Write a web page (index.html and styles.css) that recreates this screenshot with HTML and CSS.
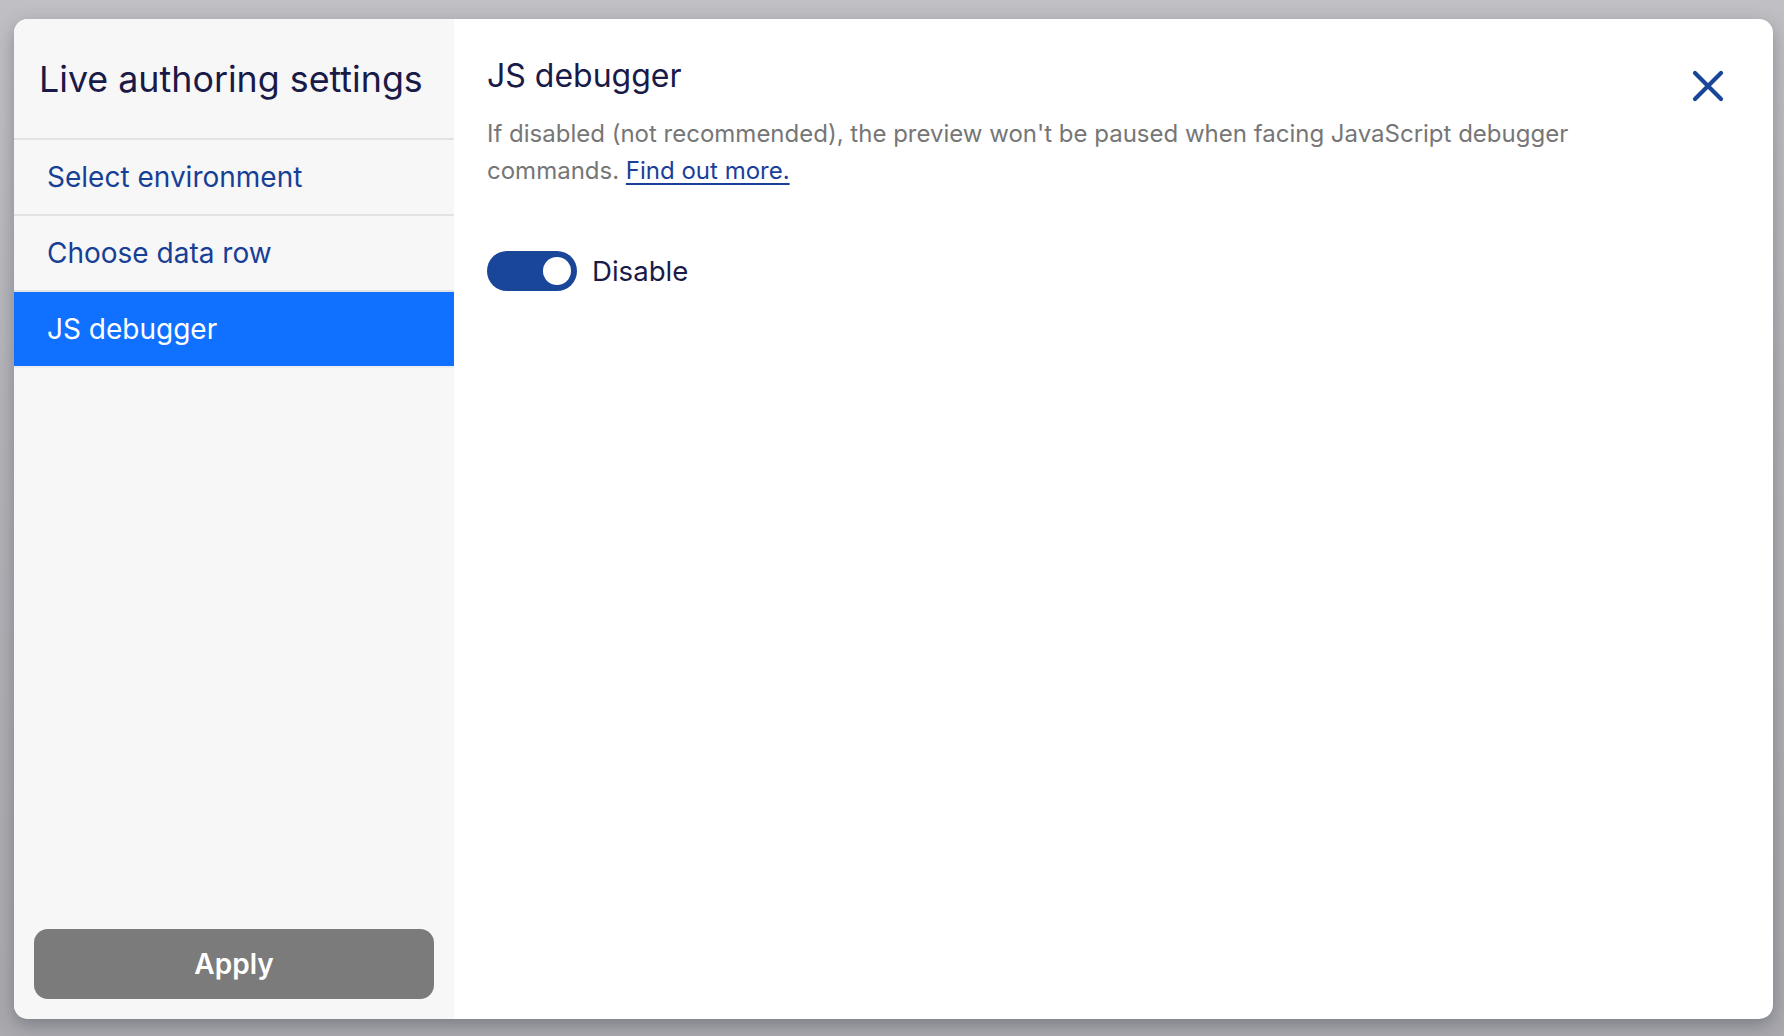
FILE: index.html
```html
<!DOCTYPE html>
<html lang="en">
<head>
  <meta charset="UTF-8">
  <meta name="viewport" content="width=device-width, initial-scale=1">
  <title>Live authoring settings</title>
  <link rel="stylesheet" href="styles.css">
</head>
<body>
  <div class="backdrop">
    <div class="modal">
      <!-- левая колонка с навигацией -->
      <aside class="sidebar">
        <h2 class="sidebar-title">Live authoring settings</h2>
        <nav class="nav">
          <a class="nav-item" href="#">Select environment</a>
          <a class="nav-item" href="#">Choose data row</a>
          <a class="nav-item active" href="#">JS debugger</a>
        </nav>
        <div class="sidebar-footer">
          <button class="apply-btn">Apply</button>
        </div>
      </aside>

      <!-- правая часть: содержимое выбранного пункта -->
      <section class="content">
        <div class="content-head">
          <div class="content-text">
            <h3 class="content-title">JS debugger</h3>
            <p class="content-desc">If disabled (not recommended), the preview won't be paused when facing JavaScript debugger commands. <a href="#">Find out more.</a></p>
          </div>
          <button class="close-btn" aria-label="Close">
            <svg width="32" height="32" viewBox="0 0 32 32">
              <path d="M3 3 L29 29 M29 3 L3 29" stroke="#1a4699" stroke-width="4.2" stroke-linecap="round" fill="none"/>
            </svg>
          </button>
        </div>

        <label class="toggle-row">
          <span class="toggle on"><span class="knob"></span></span>
          <span class="toggle-label">Disable</span>
        </label>
      </section>
    </div>
  </div>
</body>
</html>
```

FILE: styles.css
```css
/* фон — затемнённое приложение под модальным окном */
html, body {
  margin: 0;
  padding: 0;
  width: 100vw;
  height: 100vh;
  font-family: Inter, "Noto Sans", sans-serif;
  overflow: hidden;
}
.backdrop {
  box-sizing: border-box;
  height: 100vh;
  padding: 19px 11px 17px 14px;
  background: linear-gradient(#c0c0c4, #b3b3b8 40%, #a9a9ae);
  display: flex;
}
/* само окно настроек */
.modal {
  flex: 1;
  display: flex;
  border-radius: 14px;
  overflow: hidden;
  background: #fff;
  box-shadow: 0 6px 18px rgba(40, 40, 60, 0.35);
}
/* левая колонка */
.sidebar {
  width: 440px;
  background: #f7f7f7;
  display: flex;
  flex-direction: column;
}
.sidebar-title {
  margin: 0;
  height: 119px;
  display: flex;
  align-items: center;
  padding-left: 25px;
  font-size: 35.8px;
  font-weight: 400;
  color: #1a1a48;
}
.nav {
  display: flex;
  flex-direction: column;
  border-bottom: 2px solid #ededed;
}
.nav-item {
  height: 74px;
  display: flex;
  align-items: center;
  padding-left: 33px;
  border-top: 2px solid #e3e3e3;
  font-size: 28px;
  color: #183f96;
  text-decoration: none;
}
.nav-item.active {
  background: #1070ff;
  color: #fff;
}
.sidebar-footer {
  margin-top: auto;
  padding: 20px;
}
.apply-btn {
  width: 100%;
  height: 70px;
  border: none;
  border-radius: 14px;
  background: #7b7b7b;
  color: #fff;
  font-family: inherit;
  font-size: 28px;
  font-weight: 600;
  cursor: pointer;
}
/* правая часть */
.content {
  flex: 1;
  padding: 38px 49px 0 33px;
}
.content-head {
  display: flex;
  justify-content: space-between;
  gap: 60px;
}
.content-title {
  margin: 0;
  font-size: 32px;
  line-height: 38px;
  font-weight: 400;
  color: #1a1a48;
}
.content-desc {
  margin: 21px 0 0;
  font-size: 24px;
  line-height: 36.5px;
  color: #767676;
}
.content-desc a {
  color: #1a3f99;
  text-decoration: underline;
  text-underline-offset: 4px;
  text-decoration-thickness: 2px;
}
.close-btn {
  flex: none;
  margin-top: 13px;
  padding: 0;
  width: 32px;
  height: 32px;
  border: none;
  background: none;
  cursor: pointer;
}
.toggle-row {
  margin-top: 62px;
  display: flex;
  align-items: center;
  gap: 15px;
  cursor: pointer;
}
.toggle {
  box-sizing: border-box;
  width: 90px;
  height: 40px;
  border-radius: 20px;
  background: #c4c4c4;
  padding: 6px;
  display: flex;
}
.toggle.on {
  background: #1a4699;
  justify-content: flex-end;
}
.knob {
  width: 28px;
  height: 28px;
  border-radius: 50%;
  background: #fff;
}
.toggle-label {
  font-size: 27.6px;
  color: #1a1a48;
}
```
